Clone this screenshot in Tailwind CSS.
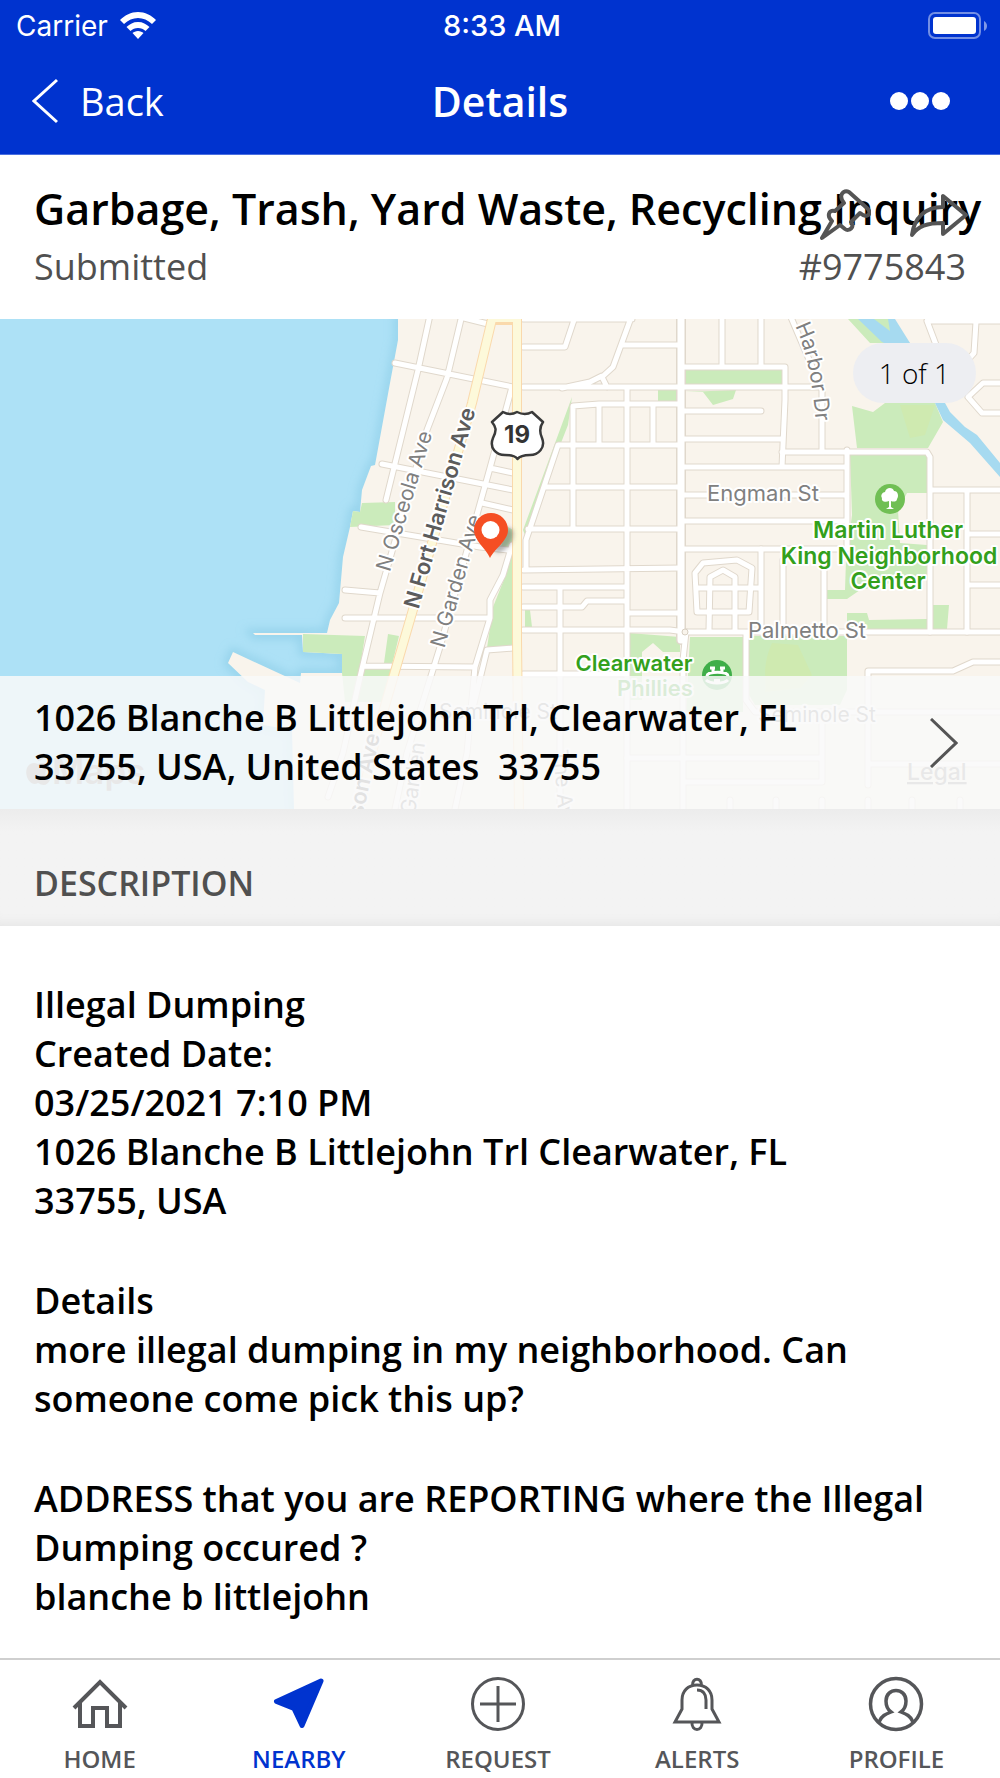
<!DOCTYPE html>
<html lang="en">
<head>
<meta charset="utf-8">
<meta name="viewport" content="width=device-width, initial-scale=1">
<title>Details</title>
<script src="https://cdn.jsdelivr.net/npm/@tailwindcss/browser@4"></script>
</head>
<body class="flex min-h-screen flex-col bg-white font-['Open_Sans',sans-serif] text-black">

<header class="border-b border-[#4a6fe0] bg-[#0033cf] text-white">
  <div class="grid h-[52px] grid-cols-3 items-center pr-3 pl-4 font-['Inter',sans-serif] text-[28px]">
    <div class="flex items-center gap-3">
      <span>Carrier</span>
      <svg class="h-7 w-9" viewBox="0 0 36 28" fill="#fff" aria-hidden="true">
        <path d="M18 0C11 0 5 3 0 8l4 4c4-4 9-6 14-6s10 2 14 6l4-4C31 3 25 0 18 0z"/>
        <path d="M18 10c-5 0-8 2-11.500 5l4 4c2-2 4.500-3 7.500-3s5.500 1 7.500 3l4-4C26 12 23 10 18 10z"/>
        <path d="M18 19c-2.500 0-4 1-5.500 2l5.500 6 5.500-6C22 20 20.500 19 18 19z"/>
      </svg>
    </div>
    <div class="text-center text-[29px] font-medium">8:33 AM</div>
    <svg class="h-7 w-15 justify-self-end" viewBox="0 0 60 28" aria-hidden="true">
      <rect x="1" y="1" width="51" height="25" rx="6" fill="none" stroke="#fff" stroke-opacity=".45" stroke-width="2"/>
      <rect x="5" y="5" width="43" height="17" rx="3" fill="#fff"/>
      <path d="M56 9c4 2 4 8 0 10z" fill="#fff" fill-opacity=".5"/>
    </svg>
  </div>
  <nav class="grid h-[102px] grid-cols-3 items-center px-8 pb-1">
    <a href="#" class="flex items-center gap-[22px] text-[38px]">
      <svg class="h-[46px] w-[26px]" viewBox="0 0 26 46" fill="none" stroke="#fff" stroke-width="3" aria-hidden="true"><path d="M25 2 2 23l23 21"/></svg>
      <span>Back</span>
    </a>
    <h1 class="text-center text-[41px] leading-[56px] font-semibold">Details</h1>
    <button type="button" aria-label="More" class="mr-[18px] flex gap-[3px] justify-self-end">
      <span class="size-[18px] rounded-full bg-white"></span>
      <span class="size-[18px] rounded-full bg-white"></span>
      <span class="size-[18px] rounded-full bg-white"></span>
    </button>
  </nav>
</header>

<main class="flex-1">
  <section class="relative px-[34px] pt-6 pb-6">
    <h2 class="text-[43px] leading-[60px] font-semibold whitespace-nowrap">Garbage, Trash, Yard Waste, Recycling Inquiry</h2>
    <div class="flex justify-between text-[36px] leading-[56px] text-[#505050]">
      <span>Submitted</span>
      <span>#9775843</span>
    </div>
    <div class="absolute top-[34px] right-[31px] flex gap-[38px] text-[#555]">
      <button type="button" aria-label="Pin">
        <svg class="h-[52px] w-[52px]" viewBox="0 0 52 52" fill="none" stroke="currentColor" stroke-width="4" stroke-linejoin="round" aria-hidden="true"><path d="M3 49 13 32C8 28 9 20 16 22L25 14C19 7 24 0 30 3L49 20C53 25 48 30 41 24L32 33C36 38 30 43 26 40L21 36Z"/></svg>
      </button>
      <button type="button" aria-label="Share">
        <svg class="h-[52px] w-[60px]" viewBox="0 0 60 52" fill="none" stroke="currentColor" stroke-width="4" stroke-linejoin="round" aria-hidden="true"><path d="M34 7v11C16 18 5 29 3 46c6-9 15-12 31-12v11l23-19z"/></svg>
      </button>
    </div>
  </section>

  <section class="relative" aria-label="Location">
    <svg class="block w-full" viewBox="0 319 1000 490" font-family="Inter, sans-serif" role="img" aria-label="Map">
      <defs>
        <g id="streets" fill="none">
          <path d="M430 315 418 370 386 500M462 315 447 378 427 430 380 593 360 677 343 753 328 797M395 363 513 387M460 317 488 324M382 464 513 490M490 468 513 473M482 503 513 510M361 527 480 547 508 550M512 387 490 468 440 647 407 753 395 809M345 590 380 593M345 618H490M363 666 475 667M487 650 513 648M487 650 470 720M512 545 503 575 490 600V618L475 667 467 753 455 809"/>
          <path d="M523 347H565L575 317M523 387H820M562 388 590 382 602 376M632 315 613 367 602 377 607 387M623 345H681M523 319H632M573 529V406L599 404H681M599 404V445M653 404V445M526 570V540L558 445H681M545 487H681M528 529H681M627 387V809M523 570 681 568M523 587H627M523 607H582L587 601H627M523 630H670L685 632H1000M560 587V809M523 674H627M627 613H681"/>
          <path d="M722 315V367M761 315V367M681 367H785V400L782 467M681 411H761M681 439H782M782 452H927L930 457V632M681 467H847M847 450V549M681 495H847M681 521H847M681 549H847M790 315 822 390V452M930 490H1000M967 490V632M967 534H1000M967 585H1000M927 321H1000M927 321 938 350M976 322 974 353 966 362M1000 383H983L968 397 982 413H1000"/>
          <path d="M761 549V632M783 560V632M824 550V632M746 633V700L755 712H1000M686 632 683 660V809M697 612 695 573 703 563 737 560 752 568 749 612ZM709 630 710 577 723 570 735 577V630M697 588H761M868 785V671H953L973 662H1000M870 764H1000M822 717V782H683M627 758H822M730 800V809M776 800V809M822 800V809M868 800V809M912 800V809M960 800V809"/>
        </g>
        <path id="harbor" d="M795 326Q811 358 816 424"/>
        <filter id="shore" x="-10%" y="-10%" width="120%" height="120%"><feGaussianBlur stdDeviation="5"/></filter>
      </defs>
      <rect y="319" width="1000" height="490" fill="#ade1f6"/>
      <path d="M398 319V340L390 383 375 465 371 466 362 490 360 512 353 511 350 527 343 557 339 603 330 620 327 633 253 633 255 635 302 635 303 652 342 654V673H301L300 683 233 652 228 663 248 682 265 690 263 725 292 730 294 809H1000V319Z" fill="none" stroke="#7cc3e0" stroke-opacity=".5" stroke-width="8" filter="url(#shore)"/>
      <path d="M398 319V340L390 383 375 465 371 466 362 490 360 512 353 511 350 527 343 557 339 603 330 620 327 633 253 633 255 635 302 635 303 652 342 654V673H301L300 683 233 652 228 663 248 682 265 690 263 725 292 730 294 809H1000V319Z" fill="#f9f4ec"/>
      <g fill="#cbebbb">
        <path d="M353 511 360 512 362 503 395 502V525L350 527ZM303 634 365 636 360 668H392L385 702H345L342 673V654L303 652ZM388 634 399 636 392 665 384 663ZM513 545V648H487L493 607 505 577ZM525 610H530L532 627H525ZM508 527 513 530V547L500 549ZM572 397 568 425 525 535 523 530Z"/>
        <path d="M685 370H782V385H685ZM658 390H676V401H658ZM685 392H703L713 405 733 399 736 390ZM852 406 873 412 885 403H935L943 422 928 448H857ZM850 455H927V493H907L898 510 900 543 927 545V575L860 590 847 599H827V590H845L846 560 852 515ZM847 613H867L869 620 927 619V629H847ZM933 605H949L947 629H933Z"/>
        <path d="M629 633 680 637V652H663L653 643 642 652V700H629ZM690 637H743V712H686ZM749 636H847V690L840 705H755L749 695ZM848 319H862L910 343H870Z"/>
      </g>
      <path d="M772 643C760 670 768 685 765 692L800 688 812 675 798 645ZM900 405H935L925 435 910 438Z" fill="#cfeab0"/>
      <path d="M858 319H895L910 343 945 403 950 412 965 427 977 435 1000 463V477L970 443 943 420 935 403 900 350 882 342Z" fill="#a6daf0"/>
      <path d="M874 319H888L890 331Z" fill="#cbebbb"/>
      <g stroke-linecap="round" stroke-linejoin="round">
        <use href="#streets" stroke="#e0d8cc" stroke-width="7"/>
        <path d="M681 315V640" stroke="#e0d8cc" stroke-width="10"/>
        <use href="#streets" stroke="#fff" stroke-width="5"/>
        <path d="M681 315V640" stroke="#fff" stroke-width="7"/>
        <g fill="none" stroke="#fad9ac" stroke-width="10"><path d="M517 310V640L519 815M493 320H517M493 315 472 403 412 613 375 740 358 815"/></g>
        <g fill="none" stroke="#fdf9da" stroke-width="8"><path d="M517 310V640L519 815M493 318H517M493 315 472 403 412 613 375 740 358 815"/></g>
      </g>
      <circle cx="685" cy="632" r="3" fill="#f9f4ec" stroke="#d8cfc2"/>

      <g font-size="21" fill="#808080" stroke="#fff" stroke-width="4" stroke-linejoin="round" paint-order="stroke">
        <text x="763" y="501" font-size="22" text-anchor="middle">Engman St</text>
        <text x="807" y="638" font-size="22" text-anchor="middle">Palmetto St</text>
        <text x="817" y="722" text-anchor="middle">Seminole St</text>
        <text x="498" y="719" text-anchor="middle">Seminole St</text>
        <text transform="translate(411 503) rotate(-73)" text-anchor="middle">N Osceola Ave</text>
        <text transform="translate(463 583) rotate(-74)" text-anchor="middle">N Garden Ave</text>
        <text transform="translate(415 815) rotate(-82)">Garden</text>
        <text transform="translate(553 750) rotate(85)">The Ave</text>
        <text><textPath href="#harbor">Harbor Dr</textPath></text>
        <g font-size="22" font-weight="600" fill="#5c5c5c">
          <text transform="translate(447 510) rotate(-74)" text-anchor="middle">N Fort Harrison Ave</text>
          <text transform="translate(380 735) rotate(-78)" text-anchor="end">Harrison Ave</text>
        </g>
        <g font-size="23" font-weight="600" fill="#33a01c" text-anchor="middle">
          <text x="888" y="538">Martin Luther</text>
          <text x="889" y="564">King Neighborhood</text>
          <text x="888" y="589">Center</text>
          <text x="634" y="671" font-size="22">Clearwater</text>
          <text x="655" y="696" font-size="22">Phillies</text>
        </g>
      </g>

      <circle cx="890" cy="499" r="15" fill="#70bf54"/>
      <path d="M886 509 889 507V501C885 503 881 501 882 498 880 495 883 492 885 492 886 487 893 487 894 491 898 491 899 496 897 499 897 502 893 502 891 501V507L894 509Z" fill="#fff"/>
      <circle cx="717" cy="675" r="15" fill="#3fae49"/>
      <path d="M707 676C707 671 728 671 728 676M706 680C710 684 724 684 728 680M713 673V668M722 673V668M710 668H715M720 668H725" fill="none" stroke="#fff" stroke-width="3"/>
      <path d="M714 679H720V684H714Z" fill="#fff"/>

      <path d="M503 412Q510 416 517 412 525 416 532 412L543 422Q538 429 542 438C546 448 538 455 530 455 523 455 519 457 517.500 459 516 457 512 455 505 455 496 455 489 448 493 438 497 430 496 427 492 422Z" fill="#fff" stroke="#3a3a3a" stroke-width="2.500" stroke-linejoin="round"/>
      <text x="517" y="443" text-anchor="middle" font-size="24" font-weight="700" fill="#333">19</text>

      <ellipse cx="503" cy="540" rx="8" ry="14" fill="#555" fill-opacity=".45" transform="rotate(35 503 540)" filter="url(#pinshade)"/>
      <path d="M490 558C486 548 474 541 474 530A17 17 0 0 1 508 530C508 541 495 548 490 558Z" fill="#f54e23"/>
      <circle cx="490.500" cy="530" r="9" fill="#fff"/>
      <defs><filter id="pinshade" x="-50%" y="-50%" width="200%" height="200%"><feGaussianBlur stdDeviation="2"/></filter></defs>

      <g fill="#888">
        <text x="52" y="784" font-size="35" font-weight="600">Maps</text>
        <path d="M38 764C42 762 47 763 49 767 44 770 44 777 50 780 47 786 43 786 38 783 34 785 30 784 27 777 24 768 30 760 38 764ZM38 761C38 757 41 754 44 753 45 757 42 761 38 761Z"/>
        <text x="907" y="780" font-size="23" font-weight="500" text-decoration="underline">Legal</text>
      </g>
    </svg>
    <span class="absolute top-6 right-6 flex h-[60px] items-center rounded-full bg-[#edeef2] px-[26px] text-[28px] font-light">1 of 1</span>
    <a href="#" class="absolute inset-x-0 bottom-0 flex h-[133px] items-center justify-between bg-[#f9f9f9]/85 px-[34px]">
      <span class="pb-0.5 text-[36px] leading-[49px] font-semibold">1026 Blanche B Littlejohn Trl, Clearwater, FL<br>33755, USA, United States&nbsp; 33755</span>
      <svg class="mr-2 h-[50px] w-7 shrink-0" viewBox="0 0 28 50" fill="none" stroke="#555" stroke-width="3" aria-hidden="true"><path d="M1 1 26 25 1 49"/></svg>
    </a>
  </section>

  <h3 class="flex h-[117px] items-center bg-linear-to-b from-[#ececec] via-[#f3f3f3] via-20% to-[#f3f3f3] px-[34px] pt-8 text-[34px] font-semibold text-[#505050] shadow-[inset_0_-12px_12px_-10px_#e4e4e4]">DESCRIPTION</h3>

  <article class="flex flex-col gap-[51px] px-[34px] pt-[54px] pb-9 text-[36px] leading-[49px] font-semibold">
    <p>Illegal Dumping<br>Created Date:<br>03/25/2021 7:10 PM<br>1026 Blanche B Littlejohn Trl Clearwater, FL<br>33755, USA</p>
    <p>Details<br>more illegal dumping in my neighborhood. Can someone come pick this up?</p>
    <p>ADDRESS that you are REPORTING where the Illegal Dumping occured ?<br>blanche b littlejohn</p>
  </article>
</main>

<nav class="sticky bottom-0 grid h-[120px] grid-cols-5 border-t-2 border-[#cfcfcf] bg-white pr-1 text-[24px] font-semibold text-[#555659]">
  <a href="#" class="flex flex-col items-center gap-[11px] pt-4">
    <svg class="size-14" viewBox="0 0 56 56" fill="none" stroke="currentColor" stroke-width="4" aria-hidden="true"><path d="M2 32 28 6l26 26M8 27v23h13V32h14v18h13V27"/></svg>
    <span class="leading-8">HOME</span>
  </a>
  <a href="#" aria-current="page" class="flex flex-col items-center gap-[11px] pt-4 text-[#0033cf]">
    <svg class="size-14" viewBox="0 0 56 56" fill="currentColor" stroke="currentColor" stroke-width="5" stroke-linejoin="round" aria-hidden="true"><path d="M50 5 5.500 25.500 23 32.500 31 49.500Z"/></svg>
    <span class="leading-8">NEARBY</span>
  </a>
  <a href="#" class="flex flex-col items-center gap-[11px] pt-4">
    <svg class="size-14" viewBox="0 0 56 56" fill="none" stroke="currentColor" stroke-width="3" aria-hidden="true"><circle cx="28" cy="28" r="25.500"/><path d="M28 10v36M10 28h36"/></svg>
    <span class="leading-8">REQUEST</span>
  </a>
  <a href="#" class="flex flex-col items-center gap-[11px] pt-4">
    <svg class="size-14" viewBox="0 0 56 56" fill="none" stroke="currentColor" stroke-width="3" aria-hidden="true"><path d="M13 33V24c0-9 6-15 15-15s15 6 15 15v9l7 13H6zM23.500 9.500C23 1 33 1 32.500 9.500M23 46c-1 10 11 10 10 0M28 14c6 0 9 4 9 10v9"/></svg>
    <span class="leading-8">ALERTS</span>
  </a>
  <a href="#" class="flex flex-col items-center gap-[11px] pt-4">
    <svg class="size-14" viewBox="0 0 56 56" fill="none" stroke="currentColor" stroke-width="3.500" aria-hidden="true"><circle cx="28" cy="28" r="25.500"/><path d="M11 46c2-6 7-8 12-10-4-3-5-7-5-11 0-14 20-14 20 0 0 4-1 8-5 11 5 2 10 4 12 10"/></svg>
    <span class="leading-8">PROFILE</span>
  </a>
</nav>
</body>
</html>
